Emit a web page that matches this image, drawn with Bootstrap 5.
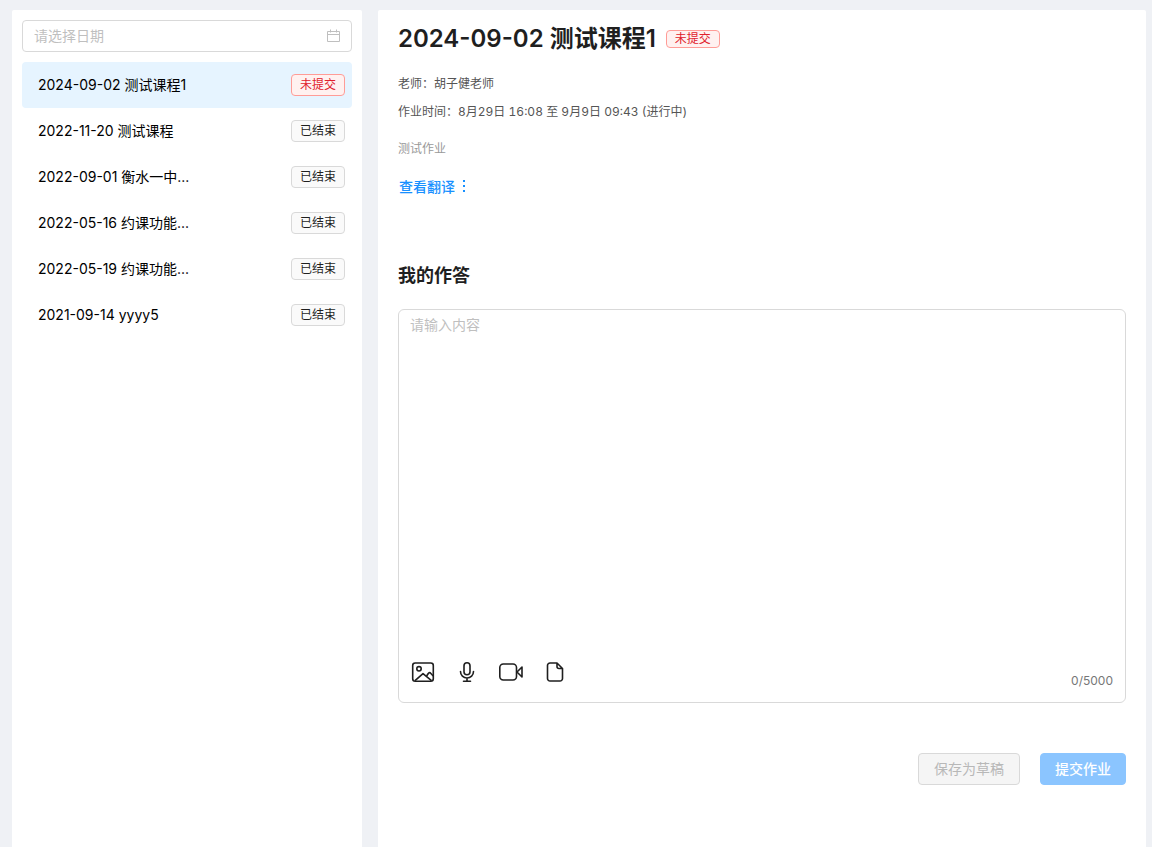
<!DOCTYPE html>
<html lang="zh-CN">
<head>
<meta charset="utf-8">
<meta name="viewport" content="width=device-width, initial-scale=1">
<title>我的作业</title>
<link href="https://cdn.jsdelivr.net/npm/bootstrap@5.3.0/dist/css/bootstrap.min.css" rel="stylesheet">
<style>
  body { background: #eff1f5; color: #1f1f1f; font: 14px/22px Inter, "Noto Sans CJK SC", sans-serif; }
  .page { padding: 10px 6px 0 12px; gap: 16px; }
  .side { width: 350px; padding: 10px; border-radius: 2px 2px 0 0; }
  .main { padding: 10px 20px 62px; min-width: 0; border-radius: 2px 2px 0 0; }
  .date-box { height: 32px; border: 1px solid #d9d9d9; border-radius: 4px; padding: 0 11px; margin-bottom: 10px; }
  .date-box input, .answer textarea { font-size: 14px; line-height: 22px; outline: 0; color: #1f1f1f; }
  ::placeholder { color: #bfbfbf !important; opacity: 1; }
  .lesson { height: 46px; padding: 0 7px 0 16px; border-radius: 4px; color: #000; }
  .lesson.active { background: #e6f4ff; }
  .lesson-name { max-width: 160px; }
  .state { font-size: 12px; line-height: 20px; padding: 0 8px; border: 1px solid #d9d9d9; border-radius: 4px; background: #fafafa; color: #1f1f1f; white-space: nowrap; }
  .state-due { background: #fff1f0; border-color: #ff9c97; color: #e0202c; }
  .state-short { line-height: 16px; }
  .title { font-size: 24px; line-height: 38px; font-weight: 600; }
  .head { gap: 10px; margin-bottom: 12px; }
  .info { font-size: 12px; line-height: 28px; color: #555; font-variant-numeric: tabular-nums; }
  .note { font-size: 12px; line-height: 18px; color: #999; margin: 14px 0 18px; }
  .translate { color: #1890ff; gap: 6px; padding-left: 1px; }
  .section { font-size: 18px; line-height: 28px; font-weight: 600; margin: 64px 0 19px; }
  .answer { height: 394px; border: 1px solid #d9d9d9; border-radius: 6px; }
  .answer textarea { padding: 4px 11px; resize: none; }
  .tools { padding: 0 12px 13px; }
  .tools-set { gap: 20px; }
  .tool { width: 24px; height: 24px; }
  .count { font-size: 12px; line-height: 16px; color: #777; margin-top: 13px; }
  .actions { gap: 20px; margin-top: 50px; }
  .act { height: 32px; padding: 0 14px; font-size: 14px; line-height: 22px; border-radius: 4px; --bs-btn-disabled-opacity: 1; }
  .act-save { --bs-btn-disabled-bg: #f5f5f5; --bs-btn-disabled-border-color: #d9d9d9; --bs-btn-disabled-color: #b8b8b8; padding: 0 15px; }
  .act-send { --bs-btn-disabled-bg: #8bc5ff; --bs-btn-disabled-border-color: #8bc5ff; --bs-btn-disabled-color: #fff; font-weight: 500; }
</style>
</head>
<body>
<div class="page d-flex min-vh-100">
  <aside class="side bg-white flex-shrink-0">
    <div class="date-box d-flex align-items-center">
      <input class="border-0 p-0 bg-transparent flex-grow-1" type="text" placeholder="请选择日期" aria-label="请选择日期">
      <svg width="14" height="14" viewBox="0 0 14 14" fill="none" stroke="#bfbfbf"><path d="M1.500 2.500h12v10h-12zM1.500 5.500h12M4.500.5v3M10.500.5v3"/></svg>
    </div>
    <nav>
      <a href="#" class="lesson active d-flex align-items-center justify-content-between text-decoration-none"><span class="lesson-name text-truncate">2024-09-02 测试课程1</span><span class="state state-due">未提交</span></a>
      <a href="#" class="lesson d-flex align-items-center justify-content-between text-decoration-none"><span class="lesson-name text-truncate">2022-11-20 测试课程</span><span class="state">已结束</span></a>
      <a href="#" class="lesson d-flex align-items-center justify-content-between text-decoration-none"><span class="lesson-name text-nowrap">2022-09-01 衡水一中...</span><span class="state">已结束</span></a>
      <a href="#" class="lesson d-flex align-items-center justify-content-between text-decoration-none"><span class="lesson-name text-nowrap">2022-05-16 约课功能...</span><span class="state">已结束</span></a>
      <a href="#" class="lesson d-flex align-items-center justify-content-between text-decoration-none"><span class="lesson-name text-nowrap">2022-05-19 约课功能...</span><span class="state">已结束</span></a>
      <a href="#" class="lesson d-flex align-items-center justify-content-between text-decoration-none"><span class="lesson-name text-nowrap">2021-09-14 yyyy5</span><span class="state">已结束</span></a>
    </nav>
  </aside>
  <main class="main bg-white flex-grow-1">
    <div class="head d-flex align-items-center">
      <h1 class="title m-0">2024-09-02 测试课程1</h1>
      <span class="state state-due state-short">未提交</span>
    </div>
    <div class="info">老师：胡子健老师</div>
    <div class="info">作业时间：8月29日 16:08 至 9月9日 09:43 (进行中)</div>
    <p class="note">测试作业</p>
    <a href="#" class="translate d-inline-flex align-items-center text-decoration-none fw-medium">查看翻译
      <svg width="6" height="16" viewBox="0 0 6 16" fill="currentColor"><path d="M2 1h2v2H2zM2 6h2v2H2zM2 11h2v2H2z"/></svg>
    </a>
    <h2 class="section">我的作答</h2>
    <div class="answer d-flex flex-column">
      <textarea class="border-0 bg-transparent w-100 flex-grow-1 d-block" placeholder="请输入内容" aria-label="我的作答"></textarea>
      <div class="tools d-flex justify-content-between align-items-start">
        <div class="tools-set d-flex">
          <button type="button" class="tool btn border-0 p-0 d-flex" aria-label="图片"><svg width="24" height="24" viewBox="0 0 24 24" fill="none" stroke="#1f1f1f" stroke-width="1.600" stroke-linejoin="round"><rect x="1.700" y="3" width="20.600" height="18.200" rx="2.500"/><circle cx="8" cy="8.800" r="2.200"/><path d="M4 20.700l8-7 8.500 7M15.500 16.500q2-4.500 3.700-3.700l3 3.200"/></svg></button>
          <button type="button" class="tool btn border-0 p-0 d-flex" aria-label="录音"><svg width="24" height="24" viewBox="0 0 24 24" fill="none" stroke="#1f1f1f" stroke-width="1.600" stroke-linecap="round"><rect x="9" y="2.800" width="6" height="12" rx="3"/><path d="M5.500 11.500a6.500 6.500 0 0 0 13 0M12 18v3.200M8.500 21.200h7"/></svg></button>
          <button type="button" class="tool btn border-0 p-0 d-flex" aria-label="视频"><svg width="24" height="24" viewBox="0 0 24 24" fill="none" stroke="#1f1f1f" stroke-width="1.600" stroke-linejoin="round"><rect x=".8" y="4" width="16.700" height="16" rx="3.500"/><path d="M23 7v10l-5-5z"/></svg></button>
          <button type="button" class="tool btn border-0 p-0 d-flex" aria-label="文件"><svg width="24" height="24" viewBox="0 0 24 24" fill="none" stroke="#1f1f1f" stroke-width="1.600" stroke-linejoin="round"><path d="M14 3H7a2.500 2.500 0 0 0-2.500 2.500v13A2.500 2.500 0 0 0 7 21h10a2.500 2.500 0 0 0 2.500-2.500V8.500zM14 3v3.500a2 2 0 0 0 2 2h3.500"/></svg></button>
        </div>
        <span class="count">0/5000</span>
      </div>
    </div>
    <div class="actions d-flex justify-content-end">
      <button type="button" class="act act-save btn" disabled>保存为草稿</button>
      <button type="button" class="act act-send btn" disabled>提交作业</button>
    </div>
  </main>
</div>
<script src="https://cdn.jsdelivr.net/npm/bootstrap@5.3.0/dist/js/bootstrap.bundle.min.js"></script>
</body>
</html>
